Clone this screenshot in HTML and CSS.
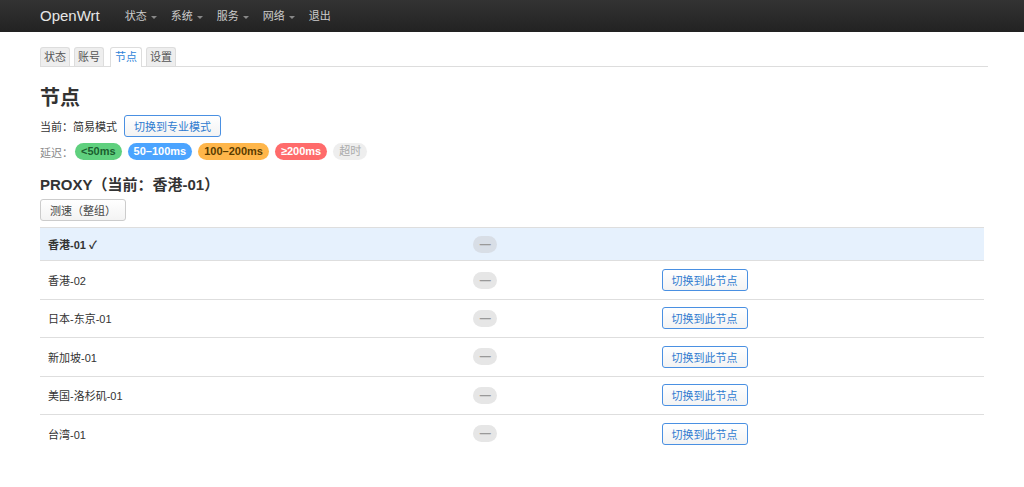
FILE: index.html
```html
<!DOCTYPE html>
<html lang="zh-CN">
<head>
  <meta charset="UTF-8" />
  <meta name="viewport" content="width=device-width, initial-scale=1.0"/>
  <title>节点 - OpenWrt</title>
  <link rel="stylesheet" href="styles.css">
</head>
<body>
  <header class="navbar">
    <a class="brand" href="#">OpenWrt</a>
    <ul class="nav">
      <li class="dropdown">状态</li>
      <li class="dropdown">系统</li>
      <li class="dropdown">服务</li>
      <li class="dropdown">网络</li>
      <li>退出</li>
    </ul>
  </header>

  <div class="container">
    <ul class="tabs">
      <li>状态</li>
      <li>账号</li>
      <li class="active">节点</li>
      <li>设置</li>
    </ul>

    <h2>节点</h2>
    <div class="mode-row">
      <span>当前：简易模式</span>
      <button class="btn btn-blue">切换到专业模式</button>
    </div>
    <div class="legend">
      <span class="legend-label">延迟：</span>
      <span class="pill green">&lt;50ms</span>
      <span class="pill blue">50–100ms</span>
      <span class="pill orange">100–200ms</span>
      <span class="pill red">≥200ms</span>
      <span class="pill gray">超时</span>
    </div>

    <h3>PROXY（当前：香港-01）</h3>
    <button class="btn btn-test">测速（整组）</button>

    <table class="nodes">
      <colgroup>
        <col style="width:45%">
        <col style="width:20%">
        <col style="width:35%">
      </colgroup>
      <tbody id="node-list"></tbody>
    </table>
  </div>

  <script>
    // 节点列表，第一个为当前选中
    const nodes = ["香港-01", "香港-02", "日本-东京-01", "新加坡-01", "美国-洛杉矶-01", "台湾-01"];
    const current = "香港-01";
    const list = document.getElementById("node-list");

    let rows = "";
    nodes.forEach(name => {
      if (name === current) {
        rows += `<tr class="current">
          <td class="name">${name} ✓</td>
          <td><span class="pill latency">—</span></td>
          <td></td>
        </tr>`;
      } else {
        rows += `<tr>
          <td class="name">${name}</td>
          <td><span class="pill latency">—</span></td>
          <td><button class="btn btn-blue">切换到此节点</button></td>
        </tr>`;
      }
    });
    list.innerHTML = rows;
  </script>
</body>
</html>
```

FILE: styles.css
```css
body {
  margin: 0;
  font-family: "Liberation Sans", "Noto Sans CJK SC", sans-serif;
  font-size: 11px;
  color: #333;
  background: #fff;
}

.navbar {
  height: 32px;
  background: linear-gradient(#333, #222);
  display: flex;
  align-items: center;
  padding-left: 40px;
}

.brand {
  color: #e6e6e6;
  font-size: 15px;
  text-decoration: none;
  margin-right: 25px;
  margin-top: -2px;
}

.nav {
  list-style: none;
  margin: 0;
  padding: 0;
  display: flex;
  gap: 14px;
}

.nav li {
  color: #ccc;
  font-size: 11px;
  line-height: 32px;
}

.dropdown::after {
  content: "";
  display: inline-block;
  margin-left: 4px;
  vertical-align: middle;
  border-left: 3px solid transparent;
  border-right: 3px solid transparent;
  border-top: 3px solid #888;
}

.container {
  margin-left: 40px;
  width: 948px;
}

.tabs {
  list-style: none;
  margin: 15px 0 0;
  padding: 0;
  display: flex;
  gap: 4px;
  border-bottom: 1px solid #ddd;
}

.tabs li {
  padding: 0 3px;
  height: 18px;
  line-height: 19px;
  background: #eee;
  border: 1px solid #ddd;
  border-bottom: none;
  border-radius: 3px 3px 0 0;
  color: #555;
}

.tabs li.active {
  background: #fff;
  color: #2f84d8;
  margin-bottom: -1px;
  height: 19px;
  margin-left: 2px;
  padding: 0 4px;
}

h2 {
  font-size: 20px;
  margin: 19px 0 5px;
  line-height: 24px;
}

.mode-row {
  display: flex;
  align-items: center;
  gap: 7px;
  height: 22px;
}

.btn {
  font-family: inherit;
  font-size: 11px;
  border-radius: 3px;
  cursor: pointer;
  height: 22px;
  padding: 0 9px;
  background: linear-gradient(#fff, #f3f3f3);
}

.btn-blue {
  color: #2f7bd0;
  border: 1px solid #4a90e2;
}

.legend {
  display: flex;
  align-items: center;
  gap: 6px;
  margin-top: 6px;
  height: 17px;
}

.legend-label {
  color: #888;
  width: 29px;
  white-space: nowrap;
}

.pill {
  display: inline-block;
  height: 17px;
  line-height: 17px;
  padding: 0 6px;
  border-radius: 9px;
  font-size: 11px;
  font-weight: bold;
}

.green { background: #5fd07e; color: #1b5e2f; }
.blue { background: #4ba4ff; color: #fff; }
.orange { background: #ffb64a; color: #5a3c00; }
.red { background: #ff6b6b; color: #fff; }
.gray { background: #eee; color: #aaa; font-weight: normal; }

h3 {
  font-size: 15px;
  margin: 16px 0 5px;
  line-height: 18px;
}

.btn-test {
  color: #444;
  border: 1px solid #ccc;
}

.nodes {
  width: 944px;
  border-collapse: collapse;
  margin-top: 6px;
}

.nodes td {
  border-top: 1px solid #dedede;
  padding: 7.7px 8px;
  height: 22px;
}

.nodes tr.current td {
  background: #e6f1fd;
  height: 16.6px;
}

.nodes tr.current .name {
  font-weight: bold;
}

.latency {
  background: #e6e6e6;
  color: #999;
  width: 10px;
  padding: 0 7px;
  text-align: center;
}

.current .latency {
  background: #d8dee6;
}
```
